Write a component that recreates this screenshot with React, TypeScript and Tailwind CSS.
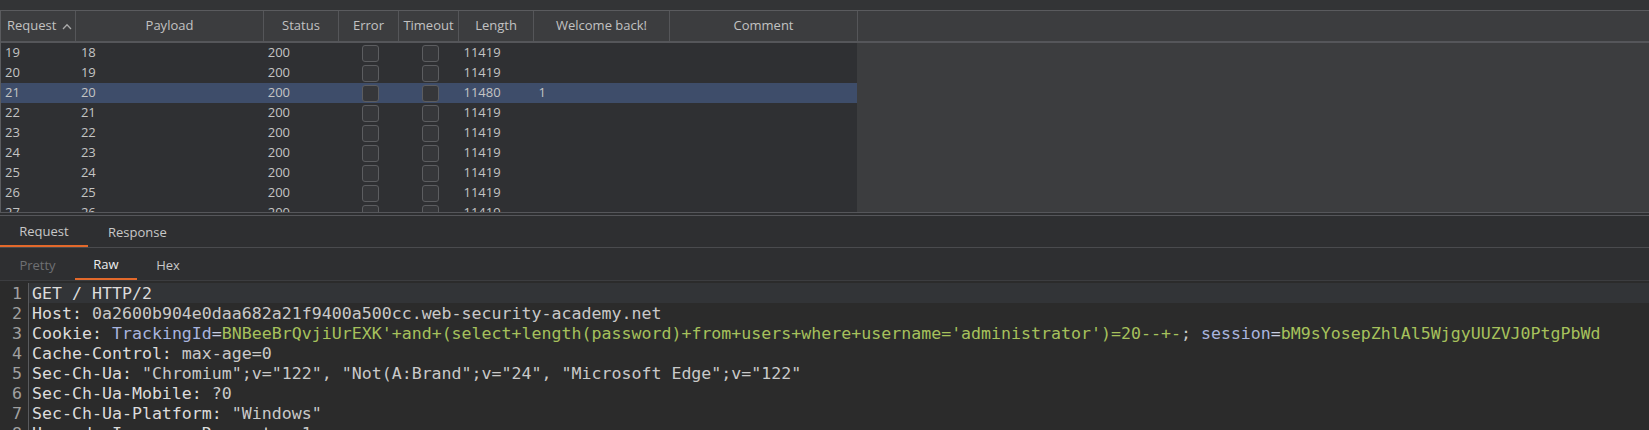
import React from "react";

type Row = { req: number; payload: number; length: number; welcome?: string; selected?: boolean };

const rows: Row[] = [
  { req: 19, payload: 18, length: 11419 },
  { req: 20, payload: 19, length: 11419 },
  { req: 21, payload: 20, length: 11480, welcome: "1", selected: true },
  { req: 22, payload: 21, length: 11419 },
  { req: 23, payload: 22, length: 11419 },
  { req: 24, payload: 23, length: 11419 },
  { req: 25, payload: 24, length: 11419 },
  { req: 26, payload: 25, length: 11419 },
  { req: 27, payload: 26, length: 11419 },
];

const Checkbox = () => (
  <div className="w-[17px] h-[17px] rounded-[3px] border border-[#5c5d60] bg-[#36373a]" />
);

const HeaderCell = ({ w, children, left }: { w: string; children: React.ReactNode; left?: boolean }) => (
  <div className={`${w} h-full flex items-center border-r border-[#555659] ${left ? "pl-[6px]" : "justify-center"}`}>
    {children}
  </div>
);

const G = ({ children }: { children: React.ReactNode }) => <span className="text-[#a6c15c]">{children}</span>;
const B = ({ children }: { children: React.ReactNode }) => <span className="text-[#a9b5df]">{children}</span>;
const V = ({ children }: { children: React.ReactNode }) => <span className="text-[#c9c9c9]">{children}</span>;

const lines: React.ReactNode[] = [
  <>GET / HTTP/2</>,
  <>Host: <V>0a2600b904e0daa682a21f9400a500cc.web-security-academy.net</V></>,
  <>
    Cookie: <B>TrackingId</B><span className="text-[#c8cee0]">=</span>
    <G>BNBeeBrQvjiUrEXK'+and+(select+length(password)+from+users+where+username='administrator')=20--+-</G>
    <V>; </V><B>session</B><span className="text-[#c8cee0]">=</span><G>bM9sYosepZhlAl5WjgyUUZVJ0PtgPbWd</G>
  </>,
  <>Cache-Control: <V>max-age=0</V></>,
  <>Sec-Ch-Ua: <V>"Chromium";v="122", "Not(A:Brand";v="24", "Microsoft Edge";v="122"</V></>,
  <>Sec-Ch-Ua-Mobile: <V>?0</V></>,
  <>Sec-Ch-Ua-Platform: <V>"Windows"</V></>,
  <>Upgrade-Insecure-Requests: <V>1</V></>,
];

export default function App() {
  return (
    <div className="w-[1649px] h-[430px] overflow-hidden bg-[#2b2b2b] font-['Open_Sans',sans-serif] text-[13px] text-[#c4c4c4] flex flex-col">
      {/* top strip */}
      <div className="h-[10px] shrink-0 bg-[#333436]" />

      {/* results table */}
      <div className="h-[202px] shrink-0 flex flex-col border-t border-l border-[#5a5b5e] bg-[#3c3d3f]">
        <div className="h-[32px] shrink-0 flex border-b-2 border-[#55565a] text-[#c2c2c2]">
          <HeaderCell w="w-[75px]" left>
            Request
            <svg className="ml-[6px]" width="10" height="7" viewBox="0 0 10 7" fill="none">
              <path d="M1 6 L5 1.8 L9 6" stroke="#a9a9a9" strokeWidth="1.3" />
            </svg>
          </HeaderCell>
          <HeaderCell w="w-[188px]">Payload</HeaderCell>
          <HeaderCell w="w-[75px]">Status</HeaderCell>
          <HeaderCell w="w-[60px]">Error</HeaderCell>
          <HeaderCell w="w-[60px]">Timeout</HeaderCell>
          <HeaderCell w="w-[75px]">Length</HeaderCell>
          <HeaderCell w="w-[136px]">Welcome back!</HeaderCell>
          <HeaderCell w="w-[188px]">Comment</HeaderCell>
        </div>
        <div className="flex-1 overflow-hidden">
          <div className="w-[856px] h-full bg-[#2f3033]">
            {rows.map((r) => (
              <div key={r.req} className={`h-[20px] flex items-center ${r.selected ? "bg-[#3e4d6a]" : ""}`}>
                <div className="w-[75px] pl-[4px]">{r.req}</div>
                <div className="w-[188px] pl-[5px]">{r.payload}</div>
                <div className="w-[75px] pl-[4px]">200</div>
                <div className="w-[60px] flex justify-center pl-[3px]"><Checkbox /></div>
                <div className="w-[60px] flex justify-center pl-[3px]"><Checkbox /></div>
                <div className="w-[75px] pl-[5px]">{r.length}</div>
                <div className="w-[136px] pl-[5px]">{r.welcome ?? ""}</div>
                <div className="w-[188px]" />
              </div>
            ))}
          </div>
        </div>
      </div>

      {/* splitter */}
      <div className="h-[4px] shrink-0 border-t border-b border-[#55565a] bg-[#2e2f31]" />

      {/* request / response tabs */}
      <div className="h-[32px] shrink-0 flex bg-[#2e2f31] border-b border-[#4a4b4e]">
        <div className="w-[88px] pt-[3px] flex items-center justify-center border-b-2 border-[#e3692b] text-[#c8c8c8]">Request</div>
        <div className="px-[20px] pt-[3px] flex items-center text-[#c8c8c8]">Response</div>
      </div>

      {/* pretty / raw / hex */}
      <div className="h-[33px] shrink-0 flex bg-[#2e2f31] border-b border-[#3c3d40]">
        <div className="w-[75px] pt-[3px] flex items-center justify-center text-[#6f7073]">Pretty</div>
        <div className="w-[62px] pt-[3px] flex items-center justify-center border-b-2 border-[#e3692b] text-[#ededed]">Raw</div>
        <div className="w-[62px] pt-[3px] flex items-center justify-center text-[#c8c8c8]">Hex</div>
      </div>

      {/* editor */}
      <div className="flex-1 flex font-['DejaVu_Sans_Mono',monospace] text-[16.6px] leading-[20px] text-[#dcdcdc] pt-[2px]">
        <div className="w-[29px] shrink-0 border-r border-[#5a5b5e] text-right pr-[6px] text-[#a0a0a0]">
          {lines.map((_, i) => (
            <div key={i} className="h-[20px] pt-[1px]">{i + 1}</div>
          ))}
        </div>
        <div className="flex-1 whitespace-pre">
          {lines.map((l, i) => (
            <div key={i} className={`h-[20px] pl-[3px] pt-[1px] ${i === 0 ? "bg-[#323437]" : ""}`}>{l}</div>
          ))}
        </div>
      </div>
    </div>
  );
}
